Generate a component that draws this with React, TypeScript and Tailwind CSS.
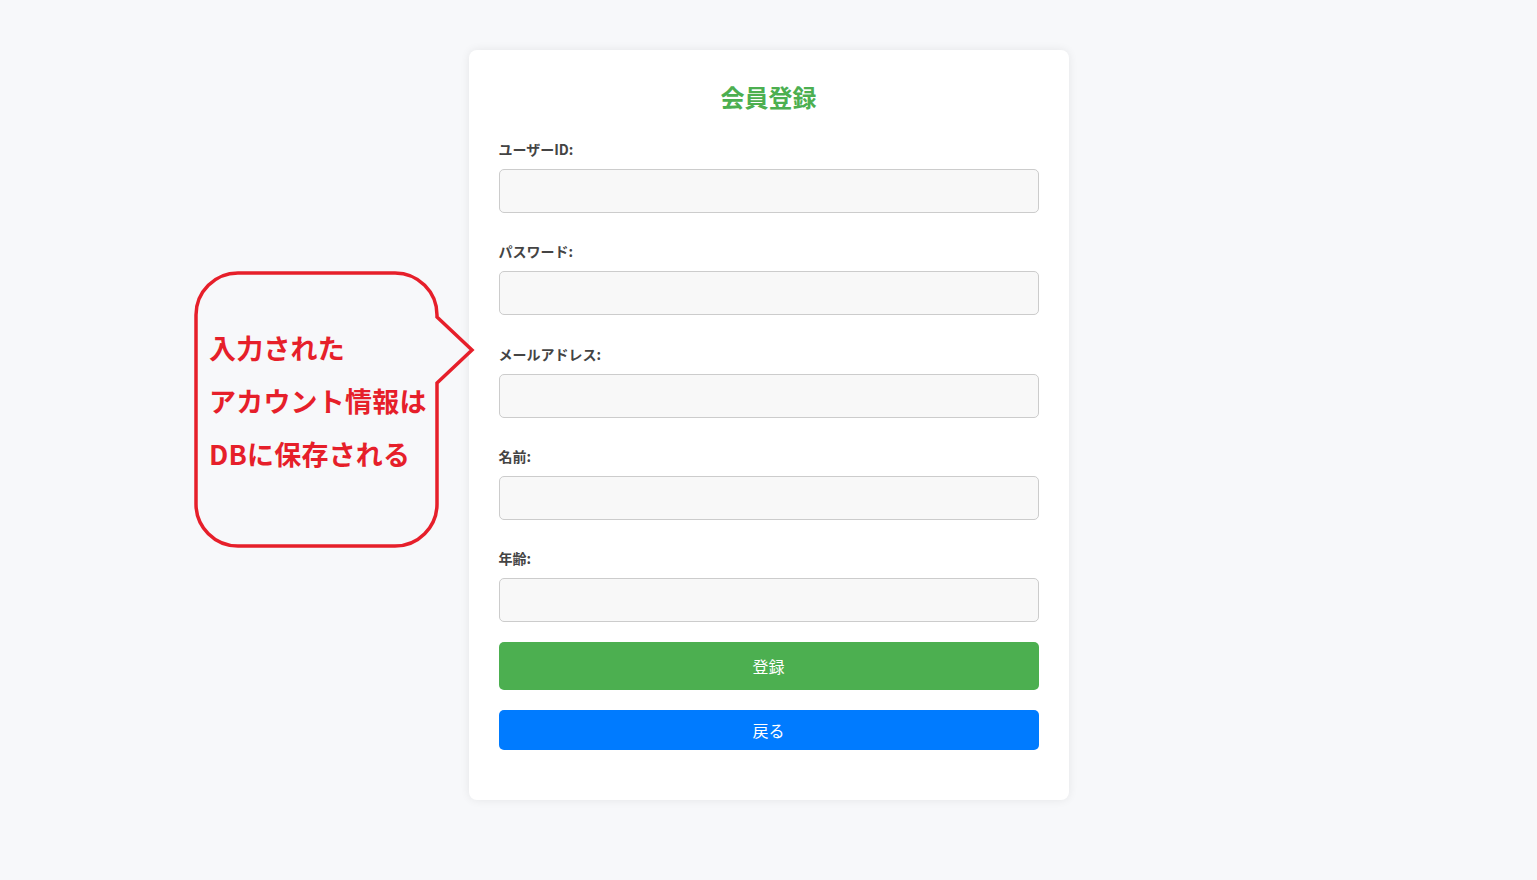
const fields = [
  { id: 'userId', label: 'ユーザーID:', type: 'text' },
  { id: 'password', label: 'パスワード:', type: 'password' },
  { id: 'email', label: 'メールアドレス:', type: 'email' },
  { id: 'name', label: '名前:', type: 'text' },
  { id: 'age', label: '年齢:', type: 'number' },
];

const jp = "font-['Noto_Sans_CJK_JP',_'Noto_Sans',_sans-serif]";

// Red speech bubble annotation pointing at the form
function Callout() {
  return (
    <div className="absolute left-[190px] top-[265px] w-[290px] h-[290px]">
      <svg width="290" height="290" viewBox="0 0 290 290" className="absolute inset-0">
        <path
          d="M 48 8 H 205 A 42 42 0 0 1 247 50 V 52 L 282 85 L 247 118 V 239 A 42 42 0 0 1 205 281 H 48 A 42 42 0 0 1 6 239 V 50 A 42 42 0 0 1 48 8 Z"
          fill="none"
          stroke="#e61f2a"
          strokeWidth="3.5"
          strokeLinejoin="miter"
        />
      </svg>
      <div className={`absolute left-[19px] top-[56px] text-[27px] font-bold leading-[53px] tracking-[0.2px] text-[#e61f2a] ${jp}`}>
        <p>入力された</p>
        <p>アカウント情報は</p>
        <p>DBに保存される</p>
      </div>
    </div>
  );
}

export default function App() {
  return (
    <div className={`relative min-h-[880px] bg-[#f7f8fa] pt-[50px] ${jp}`}>
      <Callout />

      <div className="mx-auto w-[600px] rounded-lg bg-white px-[30px] pt-[29px] pb-[50px] shadow-[0_0_10px_rgba(0,0,0,0.08)]">
        <h2 className="text-center text-[24px] font-bold leading-[36px] text-[#4caf50]">会員登録</h2>

        <form className="mt-[24px]">
          {fields.map((f) => (
            <div key={f.id} className="mb-[28.3px]">
              <label htmlFor={f.id} className="mb-[10px] block text-[14px] font-bold leading-[20px] text-[#444]">
                {f.label}
              </label>
              <input
                id={f.id}
                type={f.type}
                className="block h-[44px] w-full rounded-[5px] border border-[#ccc] bg-[#f8f8f8] px-3 text-[14px] outline-none"
              />
            </div>
          ))}

          <button
            type="submit"
            className="-mt-[8.3px] block h-[48px] w-full rounded-[5px] bg-[#4caf50] text-[16px] text-white"
          >
            登録
          </button>
          <button
            type="button"
            className="mt-[20px] block h-[40px] w-full rounded-[5px] bg-[#007bff] text-[16px] text-white"
          >
            戻る
          </button>
        </form>
      </div>
    </div>
  );
}
